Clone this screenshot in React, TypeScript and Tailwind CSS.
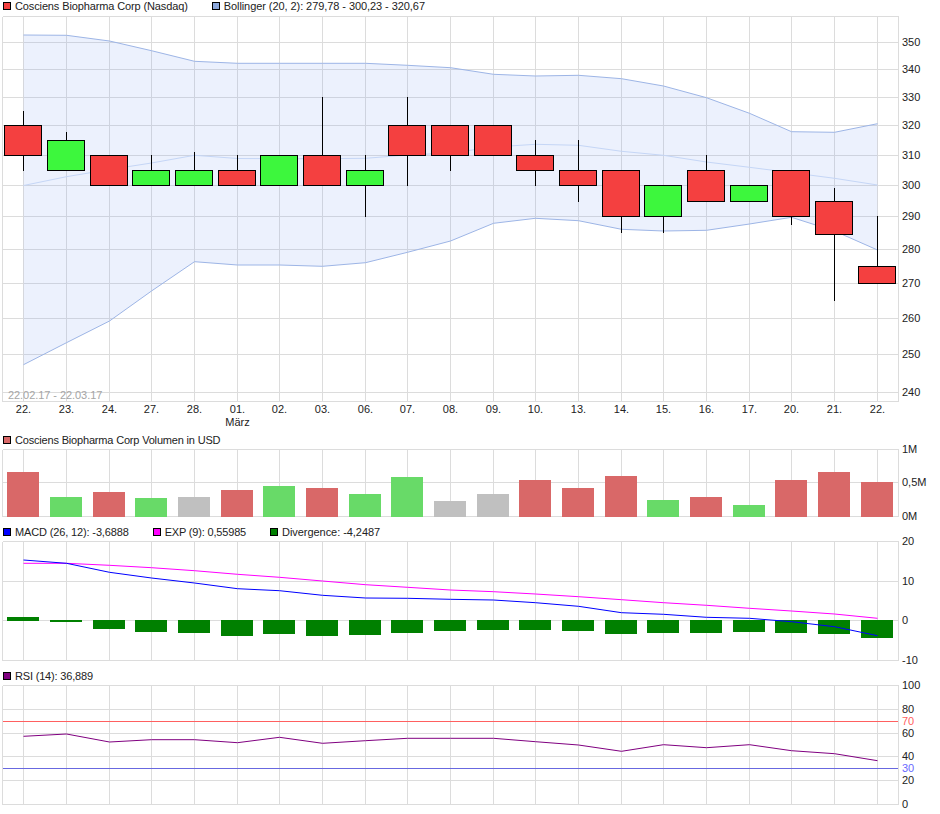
const gridX = [23.5, 66.5, 109.5, 151.5, 194.5, 237.5, 279.5, 322.5, 365.5, 407.5, 450.5, 493.5, 535.5, 578.5, 621.5, 663.5, 706.5, 749.5, 791.5, 834.5, 877.5];
const dayLabels = ["22.", "23.", "24.", "27.", "28.", "01.", "02.", "03.", "06.", "07.", "08.", "09.", "10.", "13.", "14.", "15.", "16.", "17.", "20.", "21.", "22."];

const RED = "#f44040";
const GREEN = "#3df73d";

// farbe, body oben/unten, docht oben/unten
const candles: [string, number, number, number, number][] = [
  [RED, 125.5, 155.5, 111, 171],
  [GREEN, 140.5, 170.5, 132, 170.5],
  [RED, 155.5, 185.5, 155.5, 185.5],
  [GREEN, 170.5, 185.5, 155, 185.5],
  [GREEN, 170.5, 185.5, 152, 185.5],
  [RED, 170.5, 185.5, 155, 185.5],
  [GREEN, 155.5, 185.5, 155.5, 185.5],
  [RED, 155.5, 185.5, 97, 185.5],
  [GREEN, 170.5, 185.5, 155, 217],
  [RED, 125.5, 155.5, 97, 186],
  [RED, 125.5, 155.5, 125.5, 171],
  [RED, 125.5, 155.5, 125.5, 155.5],
  [RED, 155.5, 170.5, 140, 186],
  [RED, 170.5, 185.5, 140, 202],
  [RED, 170.5, 216.5, 170.5, 233],
  [GREEN, 185.5, 216.5, 185.5, 233],
  [RED, 170.5, 201.5, 155, 201.5],
  [GREEN, 185.5, 201.5, 185.5, 201.5],
  [RED, 170.5, 216.5, 170.5, 225],
  [RED, 201.5, 234.5, 188, 301],
  [RED, 266.5, 283.5, 216, 283.5],
];

const upper = [35, 35.3, 41, 50.7, 61.3, 63.3, 63.3, 63.3, 63.3, 65.3, 67.7, 74.3, 76, 75.3, 78.7, 86, 97.7, 113.3, 131.7, 132.3, 123.7];
const middle = [185.5, 176.7, 169.5, 163, 155.3, 158.5, 158.7, 158.7, 158.3, 155, 153, 147, 144.3, 145.3, 151.3, 155.3, 162, 167.3, 172.7, 178.3, 185];
const lower = [364.7, 342.7, 321, 291, 261.7, 265, 265, 266.3, 262.7, 252.3, 241, 223.3, 218.3, 220.7, 229.3, 231, 230.3, 224, 217.3, 231, 250];

const VR = "#d96868";
const VG = "#68da68";
const VN = "#c0c0c0";
const volumes: [string, number][] = [
  [VR, 472], [VG, 497], [VR, 492], [VG, 498], [VN, 497], [VR, 490], [VG, 486], [VR, 488], [VG, 494], [VG, 477], [VN, 501],
  [VN, 494], [VR, 480], [VR, 488], [VR, 476], [VG, 500], [VR, 497], [VG, 505], [VR, 480], [VR, 472], [VR, 482],
];

const divergence = [617, 622, 629, 632, 633, 636, 634, 636, 635, 633, 631, 630, 630, 631, 634, 633, 633, 632, 633, 634, 638];
const macd = [560, 563.3, 572.3, 578, 583, 588.7, 590.7, 595.3, 598, 598.3, 599.3, 600, 602.7, 606.3, 612.7, 614.3, 617.3, 618.3, 621.7, 626.7, 635.7];
const exp9 = [563.3, 563.3, 565.3, 567.7, 570.7, 574.3, 577.3, 581, 584.7, 587.3, 590, 591.7, 594, 596.7, 599.7, 602.7, 605.3, 608.3, 611, 614, 618.3];
const rsi = [736.3, 734, 742, 739.7, 739.7, 742.7, 737.3, 743.3, 740.7, 738.3, 738.3, 738.3, 741.7, 745, 751.3, 744.7, 747.7, 744.7, 750.7, 753.7, 760.7];

const points = (ys: number[]) => ys.map((y, i) => `${gridX[i]},${y}`).join(" ");

function Legend({ items, height = "h-[14px]" }: { items: [string, string, string][]; height?: string }) {
  return (
    <div className={`flex ${height} items-center gap-[24px] pl-[3px] text-[11px] leading-none text-[#222]`}>
      {items.map(([color, label, tracking]) => (
        <div key={label} className="flex items-center gap-[4px]">
          <span className="h-[8px] w-[8px] border border-black" style={{ backgroundColor: color }} />
          <span className={tracking}>{label}</span>
        </div>
      ))}
    </div>
  );
}

function Grid({ top, bottom, rows }: { top: number; bottom: number; rows: number[] }) {
  return (
    <g stroke="#dcdcdc" strokeWidth="1" shapeRendering="crispEdges">
      {gridX.map((x) => (
        <line key={x} x1={x} x2={x} y1={top} y2={bottom} />
      ))}
      {rows.map((y) => (
        <line key={y} x1="2.5" x2="898.5" y1={y} y2={y} />
      ))}
      <line x1="2.5" x2="2.5" y1={top} y2={bottom} />
      <line x1="898.5" x2="898.5" y1={top} y2={bottom} />
    </g>
  );
}

function AxisLabels({ labels }: { labels: [string, number, string?][] }) {
  return (
    <g fontSize="11" fill="#222">
      {labels.map(([text, y, color]) => (
        <text key={text} x="902" y={y + 4} fill={color}>
          {text}
        </text>
      ))}
    </g>
  );
}

export default function App() {
  return (
    <div className="flex h-[814px] w-[940px] flex-col gap-[3px] overflow-hidden bg-white font-['Liberation_Sans',Arial,sans-serif]">
      {/* Kurs */}
      <div className="flex flex-col">
        <Legend
          height="h-[12px]"
          items={[
            [RED, "Cosciens Biopharma Corp (Nasdaq)", "tracking-[-0.125px]"],
            ["#8ca8dc", "Bollinger (20, 2): 279,78 - 300,23 - 320,67", "tracking-[-0.07px]"],
          ]}
        />
        <svg width="940" height="418" viewBox="0 12 940 418" className="block overflow-visible">
          <Grid top={16.5} bottom={401.5} rows={[16.5, 42.5, 69.5, 97.5, 125.5, 155.5, 185.5, 216.5, 249.5, 283.5, 318.5, 354.5, 392.5, 401.5]} />
          <polygon points={`${points(upper)} ${points(lower).split(" ").reverse().join(" ")}`} fill="#88aaf0" fillOpacity="0.16" />
          <polyline points={points(upper)} fill="none" stroke="#9db5e6" strokeWidth="1" />
          <polyline points={points(middle)} fill="none" stroke="#c5d6f6" strokeWidth="1" />
          <polyline points={points(lower)} fill="none" stroke="#9db5e6" strokeWidth="1" />
          {candles.map(([color, top, bottom, wickTop, wickBottom], i) => (
            <g key={i}>
              <line x1={gridX[i]} x2={gridX[i]} y1={wickTop} y2={wickBottom} stroke="#000" shapeRendering="crispEdges" />
              <rect x={gridX[i] - 19} y={top} width="37" height={bottom - top} fill={color} stroke="#000" shapeRendering="crispEdges" />
            </g>
          ))}
          <text x="8" y="399" fontSize="11" fill="#a5a5a5" className="tracking-[-0.06px]">
            22.02.17 - 22.03.17
          </text>
          <g fontSize="11" fill="#222" textAnchor="middle">
            {dayLabels.map((label, i) => (
              <text key={i} x={gridX[i]} y="413">
                {label}
              </text>
            ))}
            <text x={gridX[5]} y="426">
              März
            </text>
          </g>
          <AxisLabels
            labels={[
              ["350", 42], ["340", 69], ["330", 97], ["320", 125], ["310", 155], ["300", 185],
              ["290", 216], ["280", 249], ["270", 283], ["260", 318], ["250", 354], ["240", 392],
            ]}
          />
        </svg>
      </div>

      {/* Volumen */}
      <div className="flex flex-col">
        <Legend items={[[VR, "Cosciens Biopharma Corp Volumen in USD", "tracking-[-0.18px]"]]} />
        <svg width="940" height="75" viewBox="0 447 940 75" className="block overflow-visible">
          <Grid top={449.5} bottom={516.5} rows={[449.5, 482.5, 516.5]} />
          {volumes.map(([color, top], i) => (
            <rect key={i} x={gridX[i] - 16.5} y={top} width="32" height={517 - top} fill={color} shapeRendering="crispEdges" />
          ))}
          <AxisLabels labels={[["1M", 449], ["0,5M", 482], ["0M", 516]]} />
        </svg>
      </div>

      {/* MACD */}
      <div className="flex flex-col">
        <Legend
          items={[
            ["#0000ff", "MACD (26, 12): -3,6888", "tracking-[-0.14px]"],
            ["#ff00ff", "EXP (9): 0,55985", "tracking-[-0.18px]"],
            ["#008000", "Divergence: -4,2487", "tracking-[-0.05px]"],
          ]}
        />
        <svg width="940" height="127" viewBox="0 539 940 127" className="block overflow-visible">
          <Grid top={541.5} bottom={660.5} rows={[541.5, 581.5, 620.5, 660.5]} />
          {divergence.map((y, i) => (
            <rect
              key={i}
              x={gridX[i] - 16.5}
              y={i === 0 ? y : 620}
              width="32"
              height={i === 0 ? 4 : y - 620}
              fill="#008000"
              shapeRendering="crispEdges"
            />
          ))}
          <polyline points={points(exp9)} fill="none" stroke="#ff00ff" strokeWidth="1" />
          <polyline points={points(macd)} fill="none" stroke="#0000ff" strokeWidth="1" />
          <AxisLabels labels={[["20", 541], ["10", 581], ["0", 620], ["-10", 660]]} />
        </svg>
      </div>

      {/* RSI */}
      <div className="flex flex-col">
        <Legend items={[["#800080", "RSI (14): 36,889", "tracking-[-0.18px]"]]} />
        <svg width="940" height="131" viewBox="0 683 940 131" className="block overflow-visible">
          <Grid top={685.5} bottom={804.5} rows={[685.5, 709.5, 733.5, 756.5, 780.5, 804.5]} />
          <line x1="3" x2="898" y1="721.5" y2="721.5" stroke="#ff6060" shapeRendering="crispEdges" />
          <line x1="3" x2="898" y1="768.5" y2="768.5" stroke="#6868e0" shapeRendering="crispEdges" />
          <polyline points={points(rsi)} fill="none" stroke="#800080" strokeWidth="1" />
          <AxisLabels
            labels={[
              ["100", 685], ["80", 709], ["70", 721, "#ff6060"], ["60", 733], ["40", 756],
              ["30", 768, "#6868ff"], ["20", 780], ["0", 804],
            ]}
          />
        </svg>
      </div>
    </div>
  );
}
